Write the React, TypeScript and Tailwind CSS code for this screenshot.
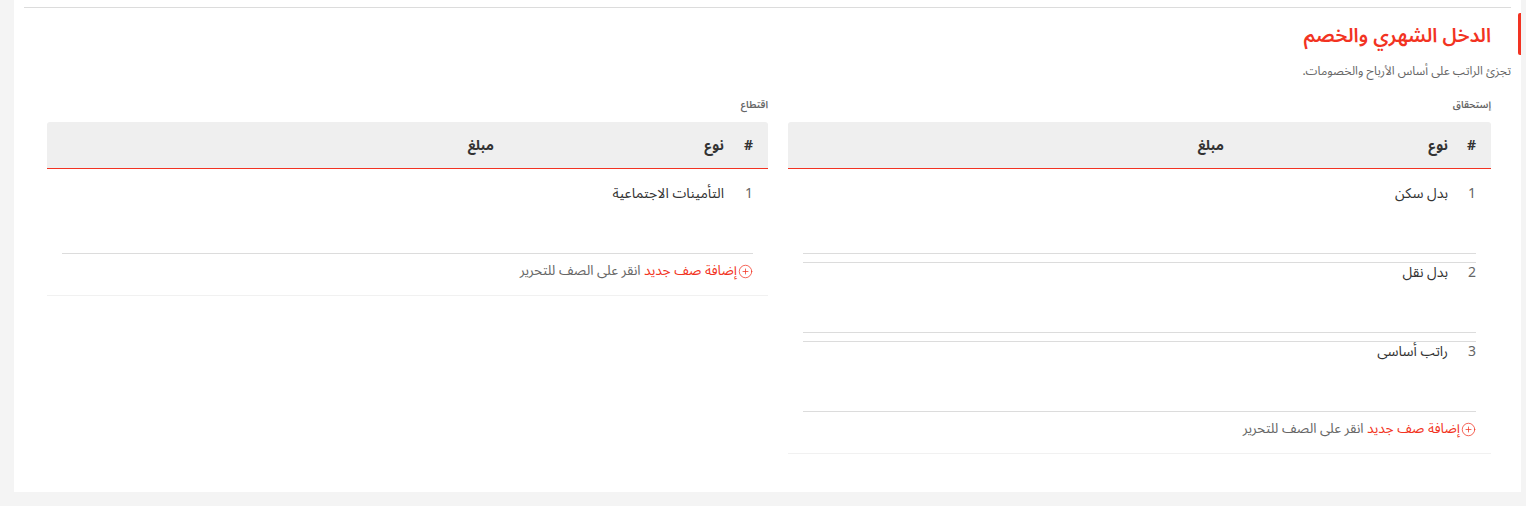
import { CirclePlus } from 'lucide-react'

const FONT = "font-['Noto_Sans_Arabic','Noto_Sans','DejaVu_Sans',sans-serif]"

interface Row {
  type: string
}

interface SalaryTableProps {
  label: string
  rows: Row[]
  numWidth: string
  typeWidth: string
  width: string
}

function SalaryTable({ label, rows, numWidth, typeWidth, width }: SalaryTableProps) {
  return (
    <div className={width}>
      <div className="h-[29px] text-[10px] leading-[24px] font-semibold text-[#666]">{label}</div>
      <div className="flex h-[47px] items-center rounded-t-[3px] border-b border-b-[#f23322] bg-[#efefef] px-[15px] text-[14px] font-bold text-[#333]">
        <div className={numWidth}>#</div>
        <div className={typeWidth}>نوع</div>
        <div>مبلغ</div>
      </div>

      <div className="px-[15px]">
        {rows.map((row, i) => (
          <div
            key={row.type}
            className={
              i === 0
                ? 'flex h-[85px] border-b border-[#dcdcdc] pt-[14px] text-[14px] text-[#333]'
                : 'mt-[8px] flex h-[71px] border-y border-[#dcdcdc] text-[14px] leading-[19px] text-[#333]'
            }
          >
            <div className={`${numWidth} text-[#666]`}>{i + 1}</div>
            <div>{row.type}</div>
          </div>
        ))}
      </div>

      {/* add row */}
      <div className="flex h-[42px] items-center gap-[1px] border-b border-[#f1f1f1] px-[15px] pb-[7px] text-[13.6px] text-[#666]">
        <CirclePlus size={15} strokeWidth={1.2} className="shrink-0 text-[#f23322]" />
        <span>
          <span className="text-[#f23322]">إضافة صف جديد</span> انقر على الصف للتحرير
        </span>
      </div>
    </div>
  )
}

export default function App() {
  return (
    <div dir="rtl" className={`h-[506px] bg-[#f4f4f4] ${FONT}`}>
      <div className="mr-[5px] ml-[14px] h-[492px] bg-white px-[10px] pt-[7px]">
        <div className="border-t border-[#dcdcdc]" />

        <div className="relative -mr-[10px] mt-[5px] flex h-[42px] items-center pt-[3px] pr-[30px]">
          <div className="absolute top-0 right-0 h-[42px] w-[3px] rounded-l-[2px] bg-[#f23322]" />
          <h1 className="text-[19.6px] font-semibold text-[#f23322]">الدخل الشهري والخصم</h1>
        </div>

        <p className="mt-[7px] h-[26px] text-[12px] leading-[20px] text-[#666]">تجزئ الراتب على أساس الأرباح والخصومات.</p>

        <div className="mt-[5px] flex gap-[20px] pr-[20px] pl-[23px]">
          <SalaryTable
            label="إستحقاق"
            numWidth="w-[28px]"
            typeWidth="w-[224px]"
            width="w-[703px]"
            rows={[{ type: 'بدل سكن' }, { type: 'بدل نقل' }, { type: 'راتب أساسى' }]}
          />
          <SalaryTable
            label="اقتطاع"
            numWidth="w-[29px]"
            typeWidth="w-[230px]"
            width="w-[721px]"
            rows={[{ type: 'التأمينات الاجتماعية' }]}
          />
        </div>
      </div>
    </div>
  )
}
